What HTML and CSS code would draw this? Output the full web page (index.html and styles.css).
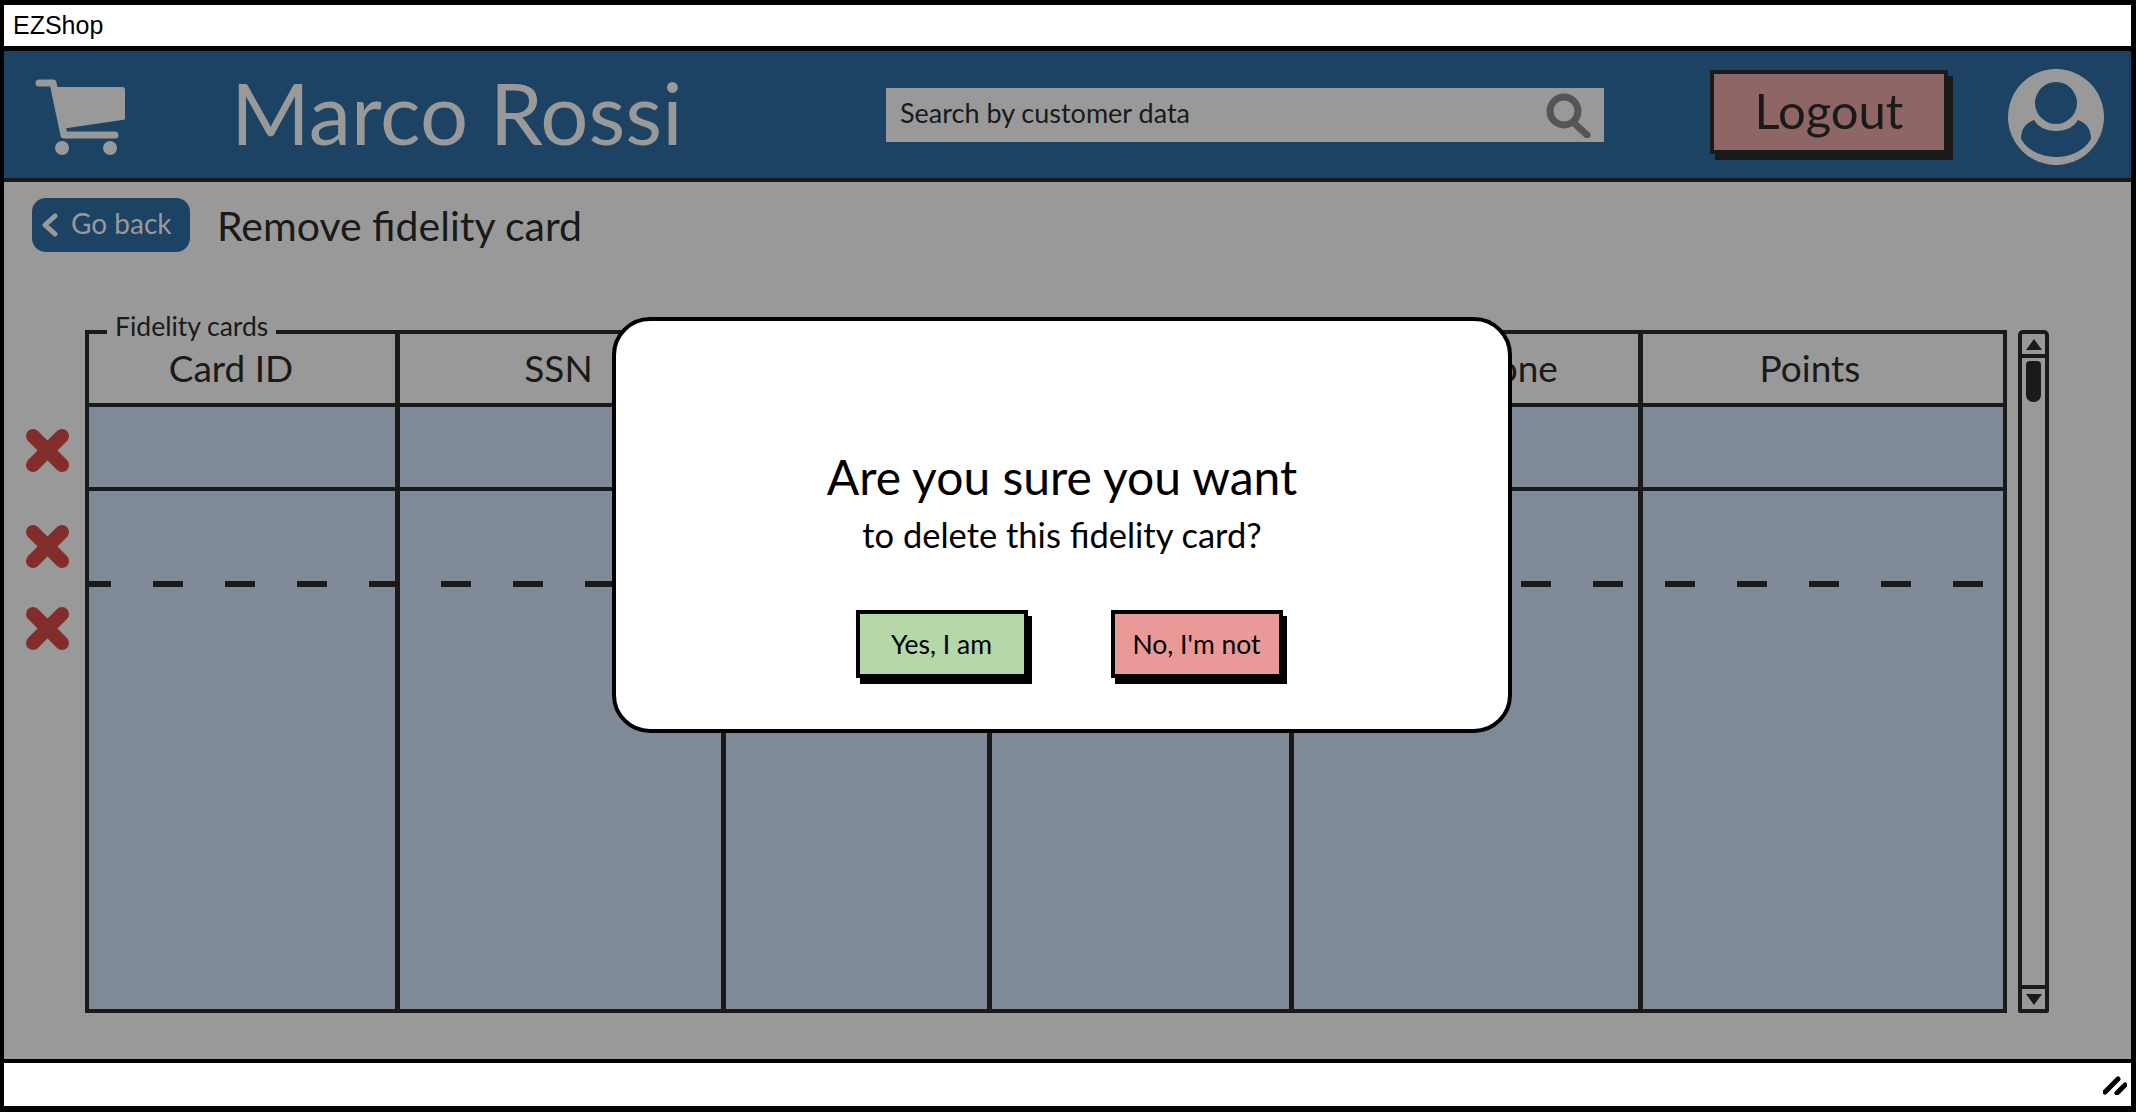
FILE: index.html
```html
<!DOCTYPE html>
<html lang="en">
 <head>
    <meta charset="utf-8">
    <title>EZShop</title>
    <link rel="stylesheet" href="styles.css">
 </head>

 <body>
    <div id="window">
      <div id="titleBar">EZShop</div>

      <div id="header">
        <svg id="cart" width="90" height="76" viewBox="0 0 90 76">
          <path d="M4 4 H18 L29 56 H80" fill="none" stroke="#999" stroke-width="7" stroke-linecap="round" stroke-linejoin="round"/>
          <path d="M20 8 H87 Q90 8 90 11 V39 Q90 41 87 41 L26 50 Z" fill="#999"/>
          <ellipse cx="27" cy="69" rx="7" ry="7" fill="#999"/>
          <ellipse cx="75" cy="69" rx="7" ry="7" fill="#999"/>
        </svg>
        <div id="userName">Marco Rossi</div>
        <div id="search">
          <span>Search by customer data</span>
          <svg width="46" height="46" viewBox="0 0 46 46">
            <circle cx="18" cy="19" r="14" fill="none" stroke="#555" stroke-width="7"/>
            <path d="M28 31 L41 43" stroke="#555" stroke-width="7" stroke-linecap="round"/>
          </svg>
        </div>
        <div id="logout">Logout</div>
        <svg id="avatar" width="96" height="96" viewBox="0 0 96 96">
          <circle cx="48" cy="48" r="48" fill="#999"/>
          <ellipse cx="48" cy="34" rx="21" ry="21" fill="#1d4364"/>
          <path d="M13 70 C13 58 20 53 26 51 C30 58 38 62 48 62 C58 62 66 58 70 51 C76 53 83 58 83 70 C76 82 62 88 48 88 C34 88 20 82 13 70 Z" fill="#1d4364"/>
        </svg>
      </div>

      <div id="main">
        <div id="toolbar">
          <div id="goBack">
            <svg width="18" height="24" viewBox="0 0 18 24">
              <path d="M14 3 L4 12 L14 21" fill="none" stroke="#999" stroke-width="5" stroke-linecap="round" stroke-linejoin="round"/>
            </svg>
            <span>Go back</span>
          </div>
          <div id="pageTitle">Remove fidelity card</div>
        </div>

        <div id="tableRow">
          <div id="removeCol">
            <svg class="removeIcon" width="43" height="43" viewBox="0 0 43 43"><path d="M7 7 L36 36 M36 7 L7 36" stroke="#832c2c" stroke-width="14" stroke-linecap="round"/></svg>
            <svg class="removeIcon" width="43" height="43" viewBox="0 0 43 43"><path d="M7 7 L36 36 M36 7 L7 36" stroke="#832c2c" stroke-width="14" stroke-linecap="round"/></svg>
            <svg class="removeIcon" width="43" height="43" viewBox="0 0 43 43"><path d="M7 7 L36 36 M36 7 L7 36" stroke="#832c2c" stroke-width="14" stroke-linecap="round"/></svg>
          </div>

          <div id="cards">
            <span id="cardsLabel">Fidelity cards</span>
            <div class="cell head cardId">Card ID</div>
            <div class="cell head ssn">SSN</div>
            <div class="cell head"></div>
            <div class="cell head"></div>
            <div class="cell head phone">Telephone</div>
            <div class="cell head last points">Points</div>

            <div class="cell row"></div>
            <div class="cell row"></div>
            <div class="cell row"></div>
            <div class="cell row"></div>
            <div class="cell row"></div>
            <div class="cell row last"></div>

            <div class="cell rest"></div>
            <div class="cell rest"></div>
            <div class="cell rest"></div>
            <div class="cell rest"></div>
            <div class="cell rest"></div>
            <div class="cell rest last"></div>

            <div id="dashes"></div>
          </div>

          <div id="scrollBar">
            <div class="scrollBtn up"><div class="arrowUp"></div></div>
            <div class="scrollTrack"><div id="scrollThumb"></div></div>
            <div class="scrollBtn down"><div class="arrowDown"></div></div>
          </div>
        </div>

        <div id="dialog">
          <div id="dialogTitle">Are you sure you want</div>
          <div id="dialogText">to delete this fidelity card?</div>
          <div id="dialogButtons">
            <div class="dialogBtn yes">Yes, I am</div>
            <div class="dialogBtn no">No, I'm not</div>
          </div>
        </div>
      </div>

      <div id="statusBar">
        <svg width="24" height="20" viewBox="0 0 24 20">
          <path d="M2 17 L15 4 M14 18 L22 10" stroke="#000" stroke-width="5" stroke-linecap="round"/>
        </svg>
      </div>
    </div>
 </body>
</html>
```

FILE: styles.css
```css
html, body {
    height: 100%;
    margin: 0;
    padding: 0;
    overflow: hidden;
}

body {
    font-family: "Lato", sans-serif;
    color: #1a1a1a;
    background-color: #fff;
}

#window {
    display: flex;
    flex-direction: column;
    box-sizing: border-box;
    height: 1112px;
    border: solid #000;
    border-width: 5px 5px 6px 4px;
}

#titleBar {
    height: 41px;
    line-height: 41px;
    padding-left: 9px;
    font-family: "Liberation Sans", Arial, sans-serif;
    font-size: 25px;
    color: #000;
    background: #fff;
    border-bottom: 5px solid #000;
}

/* header */

#header {
    display: flex;
    align-items: center;
    height: 127px;
    background: #1d4364;
    border-bottom: 4px solid #1a1a1a;
}

#cart {
    margin-left: 31px;
    margin-top: 5px;
    flex: none;
}

#userName {
    margin-left: 106px;
    margin-bottom: 6px;
    width: 655px;
    font-size: 85px;
    color: #999;
}

#search {
    display: flex;
    align-items: center;
    justify-content: space-between;
    box-sizing: border-box;
    width: 718px;
    height: 54px;
    padding: 0 12px 0 14px;
    font-size: 27px;
    color: #1a1a1a;
    background: #999;
}

#search span {
    margin-bottom: 4px;
}

#logout {
    box-sizing: border-box;
    width: 238px;
    height: 84px;
    margin-left: 106px;
    margin-bottom: 6px;
    line-height: 72px;
    text-align: center;
    font-size: 49px;
    color: #1a1a1a;
    background: #8f6666;
    border: 4px solid #1a1a1a;
    box-shadow: 5px 6px 0 #1a1a1a;
}

#avatar {
    margin-left: 60px;
    margin-top: 5px;
    flex: none;
}

/* content */

#main {
    position: relative;
    flex: 1;
    background: #999;
    padding: 16px 0 0 22px;
}

#toolbar {
    display: flex;
    align-items: center;
    height: 54px;
    padding-left: 6px;
}

#goBack {
    display: flex;
    align-items: center;
    gap: 12px;
    box-sizing: border-box;
    width: 158px;
    height: 54px;
    padding-left: 9px;
    font-size: 28px;
    color: #999;
    background: #1d4364;
    border-radius: 14px;
}

#goBack span {
    margin-bottom: 5px;
}

#pageTitle {
    margin-left: 27px;
    font-size: 41px;
}

#tableRow {
    display: flex;
    margin-top: 78px;
}

#removeCol {
    display: flex;
    flex-direction: column;
    flex: none;
    width: 59px;
    padding-top: 99px;
}

.removeIcon {
    display: block;
    margin-bottom: 53px;
}

.removeIcon + .removeIcon {
    margin-bottom: 39px;
}

#cards {
    position: relative;
    display: grid;
    grid-template-columns: 311px 326px 266px 302px 349px 1fr;
    grid-template-rows: 73px 84px 1fr;
    box-sizing: border-box;
    width: 1922px;
    height: 683px;
    border: 4px solid #1a1a1a;
}

#cardsLabel {
    position: absolute;
    top: -23px;
    left: 18px;
    padding: 0 8px;
    font-size: 26.5px;
    line-height: 30px;
    background: #999;
}

.cell {
    border-right: 5px solid #1a1a1a;
    background: #808a97;
}

.cell.last {
    border-right: 0;
}

.head {
    box-sizing: border-box;
    background: #999;
    padding-top: 12px;
    text-align: center;
    font-size: 37px;
    line-height: 44px;
    border-bottom: 4px solid #1a1a1a;
}

.cardId {
    padding-right: 22px;
}

.ssn {
    padding-right: 4px;
}

.phone {
    padding-left: 16px;
}

.points {
    padding-right: 26px;
}

.row {
    border-bottom: 4px solid #1a1a1a;
}

#dashes {
    position: absolute;
    top: 247px;
    left: 0;
    right: 20px;
    height: 6px;
    background-image: linear-gradient(90deg, #1a1a1a 30px, transparent 30px);
    background-size: 72px 6px;
    background-position: -8px 0;
}

/* scrollbar */

#scrollBar {
    display: flex;
    flex-direction: column;
    box-sizing: border-box;
    flex: none;
    width: 31px;
    height: 683px;
    margin-left: 11px;
    border: 4px solid #1a1a1a;
    border-radius: 5px 5px 2px 2px;
}

.scrollBtn {
    display: flex;
    align-items: center;
    justify-content: center;
    height: 20px;
}

.scrollBtn.up {
    border-bottom: 4px solid #1a1a1a;
}

.scrollBtn.down {
    border-top: 4px solid #1a1a1a;
}

.arrowUp, .arrowDown {
    width: 0;
    height: 0;
    border-left: 8px solid transparent;
    border-right: 8px solid transparent;
}

.arrowUp {
    border-bottom: 11px solid #1a1a1a;
}

.arrowDown {
    border-top: 11px solid #1a1a1a;
}

.scrollTrack {
    flex: 1;
    padding: 3px 4px 0;
}

#scrollThumb {
    height: 41px;
    background: #1a1a1a;
    border-radius: 4px 4px 7px 7px;
}

/* dialog */

#dialog {
    position: absolute;
    top: 135px;
    left: 608px;
    display: flex;
    flex-direction: column;
    align-items: center;
    box-sizing: border-box;
    width: 900px;
    height: 416px;
    padding-top: 127px;
    color: #000;
    background: #fff;
    border: 4px solid #000;
    border-radius: 38px;
}

#dialogTitle {
    font-size: 48px;
    line-height: 58px;
}

#dialogText {
    margin-top: 7px;
    font-size: 34.5px;
    line-height: 44px;
}

#dialogButtons {
    display: flex;
    gap: 83px;
    margin-top: 53px;
    padding-left: 14px;
}

.dialogBtn {
    box-sizing: border-box;
    width: 172px;
    height: 68px;
    line-height: 60px;
    text-align: center;
    font-size: 26.5px;
    border: 4px solid #000;
    box-shadow: 4px 6px 0 #000;
}

.yes {
    background: #b6d7a8;
}

.no {
    background: #ea9999;
}

/* status bar */

#statusBar {
    display: flex;
    align-items: center;
    justify-content: flex-end;
    box-sizing: border-box;
    height: 47px;
    padding-right: 4px;
    background: #fff;
    border-top: 4px solid #000;
}
```
